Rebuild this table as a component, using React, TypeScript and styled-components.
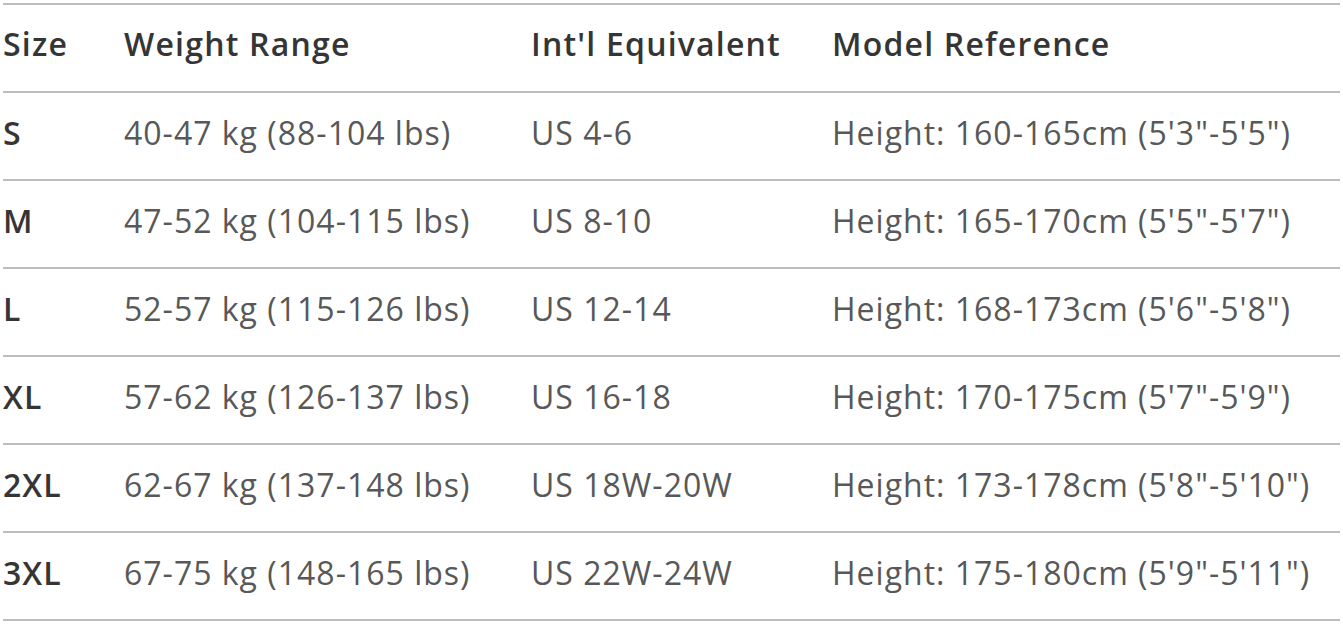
import styled, {createGlobalStyle} from 'styled-components'

const GlobalStyle = createGlobalStyle`
	html, body {
		margin: 0;
		padding: 0;
		background: #fff;
	}
	body {
		font-family: "Open Sans", "Noto Sans", sans-serif;
	}
`

interface SizeRow {
	size: string
	weight: string
	intl: string
	model: string
}

const rows: SizeRow[] = [
	{size: 'S', weight: '40-47 kg (88-104 lbs)', intl: 'US 4-6', model: 'Height: 160-165cm (5\'3"-5\'5")'},
	{size: 'M', weight: '47-52 kg (104-115 lbs)', intl: 'US 8-10', model: 'Height: 165-170cm (5\'5"-5\'7")'},
	{size: 'L', weight: '52-57 kg (115-126 lbs)', intl: 'US 12-14', model: 'Height: 168-173cm (5\'6"-5\'8")'},
	{size: 'XL', weight: '57-62 kg (126-137 lbs)', intl: 'US 16-18', model: 'Height: 170-175cm (5\'7"-5\'9")'},
	{size: '2XL', weight: '62-67 kg (137-148 lbs)', intl: 'US 18W-20W', model: 'Height: 173-178cm (5\'8"-5\'10")'},
	{size: '3XL', weight: '67-75 kg (148-165 lbs)', intl: 'US 22W-24W', model: 'Height: 175-180cm (5\'9"-5\'11")'},
]

const Wrapper = styled.div`
	padding: 3px 3px 0 3px;
`

const Table = styled.table`
	width: 1337px;
	border-collapse: collapse;
	table-layout: fixed;
	border-top: 2px solid #bdbdbd;
`

const Col = styled.col<{$w: number}>`
	width: ${p => p.$w}px;
`

const HeadCell = styled.th`
	padding: 23px 0 31px 0;
	line-height: 32px;
	text-align: left;
	font-size: 32px;
	font-weight: 600;
	letter-spacing: 1.2px;
	color: #353535;
	border-bottom: 2px solid #bdbdbd;
	white-space: nowrap;
`

const Cell = styled.td<{$bold?: boolean}>`
	padding: 24px 0 30px 0;
	line-height: 32px;
	font-size: 32px;
	font-weight: ${p => (p.$bold ? 600 : 400)};
	letter-spacing: 1px;
	color: ${p => (p.$bold ? '#353535' : '#585858')};
	border-bottom: 2px solid #bdbdbd;
	white-space: nowrap;
`

const App = () => {
	return (
		<>
			<GlobalStyle />
			<Wrapper>
				<Table>
					<colgroup>
						<Col $w={121} />
						<Col $w={407} />
						<Col $w={301} />
						<Col $w={508} />
					</colgroup>
					<thead>
						<tr>
							<HeadCell>Size</HeadCell>
							<HeadCell>Weight Range</HeadCell>
							<HeadCell>Int'l Equivalent</HeadCell>
							<HeadCell>Model Reference</HeadCell>
						</tr>
					</thead>
					<tbody>
						{rows.map(row => (
							<tr key={row.size}>
								<Cell $bold>{row.size}</Cell>
								<Cell>{row.weight}</Cell>
								<Cell>{row.intl}</Cell>
								<Cell>{row.model}</Cell>
							</tr>
						))}
					</tbody>
				</Table>
			</Wrapper>
		</>
	)
}

export default App
